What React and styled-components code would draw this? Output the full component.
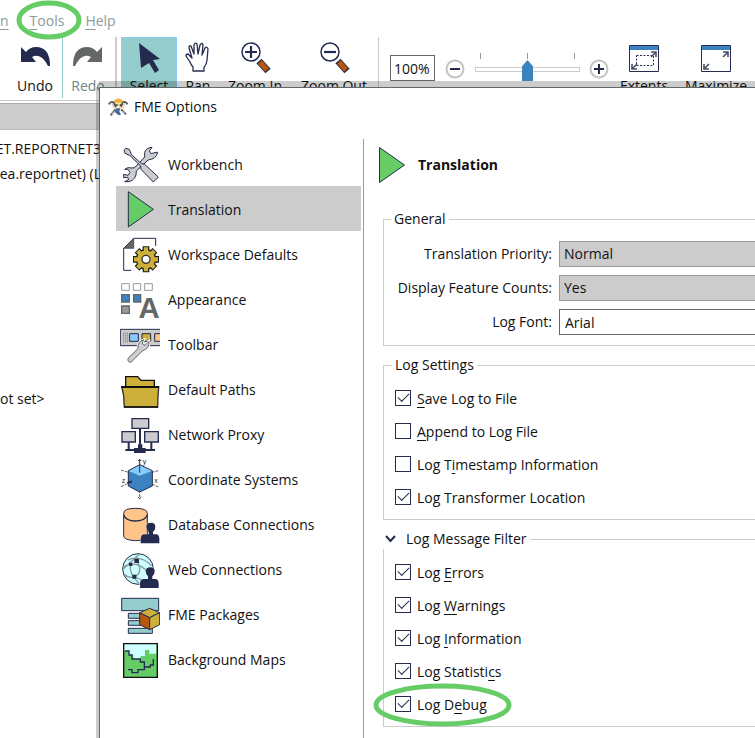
import React from 'react';
import styled, { createGlobalStyle, css } from 'styled-components';

const NAVY = '#252b4f';
const GREY = '#cccccc';
const TEAL = '#95cccc';
const GREEN = '#66cc66';
const GOLD = '#ccb03a';
const BLUE = '#3b83c0';
const SLATE = '#636866';

const GlobalStyle = createGlobalStyle`
  *, *::before, *::after { box-sizing: border-box; }
  body { margin: 0; background: #fff; overflow: hidden; }
  body, button, input, select {
    font-family: 'Open Sans', 'Noto Sans', sans-serif;
    font-size: 14px;
    line-height: 20px;
    color: #111;
  }
  button { border: 0; background: none; padding: 0; }
  svg { display: block; flex: none; }
`;

/* ---------- Layout ---------- */

const Desktop = styled.div`
  display: grid;
  min-height: 100vh;
  overflow: hidden;
  > * { grid-area: 1 / 1; min-width: 0; }
`;

const MainWindow = styled.div`
  display: flex;
  flex-direction: column;
`;

const MenuBar = styled.nav`
  display: flex;
  gap: 21px;
  height: 37px;
  padding-top: 11px;
`;

const MenuItem = styled.button`
  position: relative;
  height: 20px;
  color: #8d9a9a;
  u { text-underline-offset: 3px; }
`;

const Ring = styled.svg`
  position: absolute;
  left: ${(p) => p.$x}px;
  top: ${(p) => p.$y}px;
  overflow: visible;
  pointer-events: none;
`;

const Toolbar = styled.div`
  display: flex;
  align-items: flex-start;
  height: 64px;
  padding-left: 8px;
  border-bottom: 1px solid ${GREY};
`;

const ToolButton = styled.button`
  display: flex;
  flex-direction: column;
  align-items: center;
  flex: none;
  width: ${(p) => p.$width}px;
  height: 61px;
  white-space: nowrap;
  color: ${(p) => (p.disabled ? '#6f8484' : '#111')};
  svg { margin: 1px 0 2px; }
  ${(p) => p.$active && css`
    background: ${TEAL};
    box-shadow: inset 0 0 0 1px #88ccff;
  `}
`;

const Rule = styled.div`
  flex: none;
  width: ${(p) => p.$width}px;
  height: 61px;
  margin: 0 ${(p) => p.$after}px 0 ${(p) => p.$before}px;
  background: ${(p) => p.$color};
`;

const ZoomField = styled.input`
  flex: none;
  width: 45px;
  height: 26px;
  margin-top: 18px;
  padding: 0 3px;
  border: 1px solid ${SLATE};
  background: #fff;
`;

const RoundButton = styled.button`
  flex: none;
  margin: 22px ${(p) => p.$gap}px 0;
`;

const SliderBox = styled.div`
  flex: none;
  display: flex;
  flex-direction: column;
  width: 105px;
  padding-top: 16px;
`;

const Ticks = styled.div`
  display: flex;
  justify-content: space-between;
  padding: 0 5px;
  i { width: 1px; height: 6px; background: #999; }
`;

const Slider = styled.input`
  appearance: none;
  width: 100%;
  height: 21px;
  margin: 0;
  background: none;
  &::-webkit-slider-runnable-track {
    height: 5px;
    border: 1px solid ${GREY};
    background: #fff;
  }
  &::-webkit-slider-thumb {
    appearance: none;
    width: 11px;
    height: 21px;
    margin-top: -8px;
    background: ${BLUE};
    clip-path: polygon(50% 0, 100% 30%, 100% 100%, 0 100%, 0 30%);
  }
`;

const PanelHeader = styled.div`
  height: 27px;
  margin: 2px 0 9px;
  border-top: 1px solid #aaa;
  border-bottom: 1px solid #bbb;
  background: ${GREY};
`;

const Panel = styled.div`
  display: flex;
  flex-direction: column;
  align-items: flex-end;
  width: 101px;
`;

const PanelLine = styled.div`
  height: 20px;
  margin-bottom: 5px;
  white-space: nowrap;
`;

const PanelNote = styled(PanelLine)`
  align-self: flex-start;
  margin-top: 200px;
`;

/* ---------- Dialog ---------- */

const Dialog = styled.section`
  z-index: 1;
  display: flex;
  flex-direction: column;
  margin: 87px 0 0 99px;
  border-top: 1px solid ${SLATE};
  border-left: 1px solid ${SLATE};
  background: #fff;
  box-shadow: 0 -6px 0 rgba(0, 0, 0, 0.2), -3px 0 0 rgba(0, 0, 0, 0.2);
`;

const TitleBar = styled.header`
  display: flex;
  align-items: center;
  gap: 6px;
  height: 38px;
  padding-left: 8px;
`;

const DialogBody = styled.div`
  display: flex;
  flex: 1;
  margin-top: 13px;
`;

const Sections = styled.nav`
  flex: none;
  display: flex;
  flex-direction: column;
  width: 264px;
  padding: 2px 2px 0 16px;
  border-right: 1px solid #999;
`;

const SectionButton = styled.button`
  display: flex;
  align-items: center;
  gap: 8px;
  height: 45px;
  padding-left: 4px;
  text-align: left;
  background: ${(p) => (p.$active ? GREY : 'transparent')};
  span { padding-top: 2px; }
`;

const Page = styled.main`
  flex: 1;
  min-width: 0;
  padding: 7px 0 10px 14px;
`;

const PageTitle = styled.h1`
  display: flex;
  align-items: center;
  gap: 13px;
  height: 38px;
  margin: 0 0 25px;
  font-size: 14px;
  font-weight: 700;
`;

const Group = styled.fieldset`
  min-width: 0;
  margin: 0 0 9px 5px;
  padding: ${(p) => p.$pad};
  border: 1px solid ${GREY};
  border-right: 0;
  legend { height: 20px; padding: 0 3px; margin-left: -3px; }
`;

const FieldGrid = styled.div`
  display: grid;
  grid-template-columns: 158px 1fr;
  gap: 8px 7px;
  align-items: center;
  label { text-align: right; white-space: nowrap; }
`;

const fieldStyle = css`
  appearance: none;
  width: 100%;
  height: 26px;
  border: 1px solid #999;
  border-right: 0;
  border-radius: 0;
  padding: 0 4px;
`;

const Select = styled.select`
  ${fieldStyle}
  background: ${GREY};
`;

const TextInput = styled.input`
  ${fieldStyle}
  border-color: ${SLATE};
  padding-left: 5px;
  background: #fff;
`;

const CheckList = styled.div`
  display: flex;
  flex-direction: column;
  align-items: flex-start;
  gap: 13px;
`;

const CheckRow = styled.label`
  position: relative;
  display: flex;
  align-items: center;
  gap: 6px;
  height: 20px;
  white-space: nowrap;
  u { text-underline-offset: 3px; }
  input {
    appearance: none;
    display: grid;
    place-items: center;
    width: 16px;
    height: 16px;
    margin: 0 0 2px;
    border: 1px solid ${NAVY};
    background: #fff;
  }
  input:checked::before {
    content: '';
    width: 11px;
    height: 6px;
    border: solid ${NAVY};
    border-width: 0 0 1px 1px;
    transform: translateY(-2px) rotate(-45deg);
  }
`;

const Disclosure = styled.button`
  display: flex;
  align-items: center;
  gap: 9px;
  height: 20px;
  margin-left: -12px;
  padding-left: 1px;
  background: #fff;
`;

/* ---------- Toolbar icons ---------- */

const UndoIcon = ({ flip, color }) => (
  <svg width="32" height="36" viewBox="0 0 32 36">
    <g transform={flip ? 'translate(32 0) scale(-1 1)' : undefined} fill={color}>
      <path d="M2 9 L2 24 L17 24 L13 19 Q22 14 29 28 L31 28 Q31 9 17 9 Q11 9 7 14 Z" />
    </g>
  </svg>
);

const SelectIcon = () => (
  <svg width="32" height="36" viewBox="0 0 32 36">
    <path d="M6 5 L27 21 L20 22 L26 32 L22 35 L16 25 L8 30 Z" fill={NAVY} />
  </svg>
);

const PanIcon = () => (
  <svg width="32" height="36" viewBox="0 0 32 36">
    <path
      d="M11 33 V29 Q9 27 8 24 L4 18 Q4 16 6 16 L10 20 L7 10 Q7 7 9 8 L12 16 L12 7 Q13 4 15 6 L16 16 L18 7 Q20 4 21 7 L20 17 L23 10 Q25 8 26 11 L25 22 Q24 28 22 29 V33 Z"
      fill="#fff" stroke={NAVY} strokeWidth="1.3" strokeLinejoin="round"
    />
  </svg>
);

const MagnifierIcon = ({ plus }) => (
  <svg width="32" height="36" viewBox="0 0 32 36">
    <path d="M20 23 L29 33" stroke={NAVY} strokeWidth="7" />
    <path d="M21 24 L28 32" stroke="#b8560c" strokeWidth="5" />
    <circle cx="12" cy="14" r="9" fill="#fff" stroke={NAVY} strokeWidth="1.5" />
    <path d={plus ? 'M6 14 H18 M12 8 V20' : 'M6 14 H18'} stroke={NAVY} strokeWidth="2.2" />
  </svg>
);

const RoundIcon = ({ plus }) => (
  <svg width="20" height="20" viewBox="0 0 20 20">
    <circle cx="10" cy="10" r="8.5" fill="#fff" stroke="#c4c4c4" strokeWidth="2" />
    <path d={plus ? 'M5 10 H15 M10 5 V15' : 'M5 10 H15'} stroke={NAVY} strokeWidth="2" />
  </svg>
);

const WindowIcon = ({ dashed }) => (
  <svg width="32" height="36" viewBox="0 0 32 36">
    <path d="M1.5 7.5 H30.5 V33.5 H1.5 Z" fill="#fff" stroke={NAVY} />
    <path d="M2 8 H30 V12 H2 Z" fill={BLUE} />
    {dashed && <path d="M8.5 17.5 H25.5 V27.5 H8.5 Z" fill="none" stroke={NAVY} strokeDasharray="2 1.5" />}
    <g stroke="#4b4f66" strokeWidth="1.6" fill="none">
      <path d="M23 14 H28 V19 M28 14 L23 19" />
      <path d="M4 26 V31 H9 M4 31 L9 26" />
    </g>
  </svg>
);

/* ---------- Section icons, drawn on a 3-unit pixel grid ---------- */

const SectionIcon = ({ top, children }) => (
  <svg width="40" height="45" viewBox={`30 ${top} 120 135`} aria-hidden="true">{children}</svg>
);

const PlayIcon = () => (
  <svg width="27" height="38" viewBox="0 0 27 38">
    <path d="M1.5 1.5 L26.5 19 L1.5 36.5 Z" fill={GREEN} stroke={NAVY} />
  </svg>
);

const Person = () => (
  <g fill={NAVY} stroke="#fff" strokeWidth="2" paintOrder="stroke">
    <path d="M109 350 Q109 338 123 338 Q136 338 136 350 Q136 361 129 365 V373 H141 Q148 376 148 385 V400 H92 V385 Q92 376 100 373 H116 V365 Q109 360 109 350 Z" />
  </g>
);

const CubeEdges = { fill: 'none', stroke: NAVY, strokeWidth: 3 };

const icons = {
  workbench: (
    <SectionIcon top={18}>
      <g fill={GREY} stroke={NAVY} strokeWidth="3" strokeLinejoin="round">
        <path d="M41 118 L54 121 L60 112 L54 103 H44 Q52 95 66 99 L74 98 L104 66 V52 Q108 38 126 37 L118 48 L123 56 L138 52 L143 52 Q139 72 114 75 L79 108 Q80 134 57 140 H44 L56 134 L53 127 L41 128 Z" />
        <path d="M42 46 L47 40 L58 43 L64 58 L94 86 L104 88 L145 126 L130 141 L93 103 L92 93 L60 62 L45 55 Z" />
      </g>
    </SectionIcon>
  ),
  translation: (
    <SectionIcon top={153}>
      <path d="M55 170 L130 223 L55 276 Z" fill={GREEN} stroke={NAVY} strokeWidth="3" />
    </SectionIcon>
  ),
  workspace: (
    <SectionIcon top={288}>
      <path d="M64 406 H41 V340 L71 310 H137 V333" fill="#fff" stroke={NAVY} strokeWidth="3" />
      <path d="M41 340 L71 310 V340 Z" fill={SLATE} stroke={NAVY} strokeWidth="2" />
      <g transform="translate(108 373)">
        <g stroke="#1c1c1c" strokeWidth="20">
          <path d="M0 -39 V39 M-39 0 H39 M-27 -27 L27 27 M27 -27 L-27 27" />
        </g>
        <circle r="31" fill="#1c1c1c" />
        <g stroke={GOLD} strokeWidth="13">
          <path d="M0 -36 V36 M-36 0 H36 M-25 -25 L25 25 M25 -25 L-25 25" />
        </g>
        <circle r="27" fill={GOLD} />
        <circle r="12" fill="#fff" stroke="#333" strokeWidth="4" />
      </g>
    </SectionIcon>
  ),
  appearance: (
    <SectionIcon top={3}>
      <g fill="#fff" stroke="#999" strokeWidth="3">
        <path d="M35 26 H58 V46 H35 Z M70 26 H92 V46 H70 Z M104 26 H127 V46 H104 Z" />
      </g>
      <g fill={BLUE} stroke={SLATE} strokeWidth="4">
        <path d="M35 59 H58 V81 H35 Z M71 59 H92 V81 H71 Z" />
      </g>
      <path d="M35 93 H58 V115 H35 Z" fill="#999" stroke={SLATE} strokeWidth="4" />
      <text x="117" y="128" textAnchor="middle" fontFamily="Liberation Sans, sans-serif" fontWeight="700" fontSize="88" fill={SLATE}>A</text>
    </SectionIcon>
  ),
  toolbar: (
    <SectionIcon top={138}>
      <path d="M152 163 H31 V212 H152" fill={GREY} stroke={NAVY} strokeWidth="3" />
      <path d="M41 173 V204 M47 173 V204 M53 173 V204" stroke="#666" strokeWidth="3" strokeDasharray="3 3" />
      <g stroke={NAVY} strokeWidth="3">
        <path d="M59 176 H85 V199 H59 Z" fill="#88ccff" />
        <path d="M96 176 H122 V199 H96 Z" fill={GOLD} />
        <path d="M134 176 H153 V199 H134 Z" fill="#ffc488" />
      </g>
      <path d="M54 250 L84 221 Q82 199 101 194 L96 205 L105 211 L117 199 Q120 219 97 228 L64 261 Q52 264 54 250 Z" fill={GREY} stroke="#fff" strokeWidth="8" />
      <path d="M54 250 L84 221 Q82 199 101 194 L96 205 L105 211 L117 199 Q120 219 97 228 L64 261 Q52 264 54 250 Z" fill={GREY} stroke={SLATE} strokeWidth="3" />
    </SectionIcon>
  ),
  paths: (
    <SectionIcon top={273}>
      <path d="M47 334 V305 H83 L93 316 H133 V334" fill={GOLD} stroke="#111" strokeWidth="4" />
      <path d="M34 336 H147 L144 362 L143 396 H42 L40 362 Z" fill={GOLD} />
      <path d="M33 336 H148" stroke="#111" strokeWidth="6" />
      <path d="M36 339 L41 362 L43 396 H143 L144 362 L146 339" fill="none" stroke="#333" strokeWidth="4" />
      <path d="M42 396 H144" stroke="#111" strokeWidth="5" />
    </SectionIcon>
  ),
  network: (
    <SectionIcon top={3}>
      <path d="M90 56 V104 M56 97 V120 M124 97 V120 M46 120 H135" stroke={NAVY} strokeWidth="6" />
      <path d="M84 103 H97 V114 H107 V129 H72 V114 H84 Z" fill={NAVY} />
      <g fill={GREY} stroke={NAVY} strokeWidth="4">
        <path d="M66 26 H116 V55 H66 Z M36 65 H76 V96 H36 Z M104 65 H145 V96 H104 Z" />
      </g>
    </SectionIcon>
  ),
  coordinates: (
    <SectionIcon top={138}>
      <path d="M33 180 L55 187 M145 182 L126 187 M33 230 L55 220 M126 222 L145 231 M89 240 V266" stroke={SLATE} strokeWidth="3" strokeDasharray="9 3" />
      <path d="M55 182 L89 164 L127 182 L89 200 Z" fill="#88ccff" />
      <path d="M55 182 L89 197 L127 182 V228 L89 246 L55 228 Z" fill={BLUE} />
      <path d="M55 182 L89 164 L127 182 V228 L89 246 L55 228 Z M89 148 V188 M84 153 L89 148 L94 153 M84 261 L89 266 L94 261" {...CubeEdges} />
      <path d="M52 219 L66 214" stroke={NAVY} strokeWidth="6" />
      <g fontSize="21" fill={NAVY} fontFamily="Liberation Sans, sans-serif">
        <text x="98" y="162">y</text>
        <text x="133" y="218">x</text>
        <text x="35" y="218">z</text>
      </g>
    </SectionIcon>
  ),
  database: (
    <SectionIcon top={273}>
      <path d="M41 310 Q41 295 76 295 Q112 295 112 310 V380 Q110 392 76 392 Q41 390 41 378 Z" fill="#ffc488" stroke={NAVY} strokeWidth="3" />
      <path d="M41 315 Q48 333 76 333 Q105 333 112 315" fill="none" stroke={NAVY} strokeWidth="4" />
      <Person />
    </SectionIcon>
  ),
  web: (
    <SectionIcon top={3}>
      <circle cx="84" cy="72" r="46" fill="#ccffff" stroke={NAVY} strokeWidth="3" />
      <path d="M53 45 Q90 28 125 62 M40 72 Q80 35 88 28 M62 57 Q95 55 116 86 M62 57 Q55 85 86 114 M80 48 Q102 80 73 96 Q55 100 43 88 M73 96 L110 110 M62 57 L40 65" fill="none" stroke="#8a9a9a" strokeWidth="4" />
      <path d="M73 41 H87 V54 H73 Z M57 53 H67 V63 H57 Z M67 89 H79 V101 H67 Z" fill={NAVY} />
      <g transform="translate(-2 -271)"><Person /></g>
    </SectionIcon>
  ),
  packages: (
    <SectionIcon top={138}>
      <g fill={TEAL} stroke={NAVY} strokeWidth="3">
        <path d="M35 160 H146 V197 H35 Z M55 205 H94 V220 H55 Z M55 227 H94 V241 H55 Z M55 250 H127 V265 H55 Z" />
      </g>
      <path d="M89 203 L119 190 L149 203 L119 218 Z" fill={GOLD} stroke={NAVY} strokeWidth="3" />
      <path d="M89 203 L119 218 V254 L89 239 Z" fill="#b8560c" stroke={NAVY} strokeWidth="3" />
      <path d="M149 203 L119 218 V254 L149 239 Z" fill={GOLD} stroke={NAVY} strokeWidth="3" />
    </SectionIcon>
  ),
  maps: (
    <SectionIcon top={273}>
      <path d="M40 295 H142 V397 H40 Z" fill={GREEN} />
      <path d="M42 297 H139 V326 H118 V315 H105 V333 H92 V343 H70 V330 H57 V318 H42 Z" fill="#ccffff" />
      <path d="M45 318 H57 V330 H66 V342 H91 V351 H103 V366 H121 V360 H130 V342 M103 366 V374 H84 V383 H66 V374 H54" fill="none" stroke={NAVY} strokeWidth="4" />
      <path d="M41 296 H142 V397 H41 Z" fill="none" stroke="#111" strokeWidth="4" />
    </SectionIcon>
  ),
};

const AppIcon = () => (
  <svg width="20" height="20" viewBox="0 0 60 60">
    <circle cx="31" cy="23" r="18" fill="#f9e6bd" stroke="#c9c9c9" strokeWidth="2" />
    <path d="M18 17 Q20 5 32 5 Q43 6 45 17 Z" fill="#f0b429" />
    <path d="M24 24 H29 M35 24 H40" stroke="#333" strokeWidth="4" />
    <path d="M24 34 H37 L34 43 L39 54 H31 L21 46 Z" fill="#3b6ca3" />
    <path d="M3 22 Q8 11 17 17 L24 30 M58 22 Q52 12 45 17 L38 29 M22 38 L8 55 M40 38 L54 52" fill="none" stroke="#555" strokeWidth="6" />
    <path d="M7 18 L16 20 M45 19 L54 20 M19 43 L11 52 M43 42 L50 49" stroke="#ddd" strokeWidth="3" />
  </svg>
);

/* ---------- Data ---------- */

const sections = [
  ['workbench', 'Workbench'],
  ['translation', 'Translation'],
  ['workspace', 'Workspace Defaults'],
  ['appearance', 'Appearance'],
  ['toolbar', 'Toolbar'],
  ['paths', 'Default Paths'],
  ['network', 'Network Proxy'],
  ['coordinates', 'Coordinate Systems'],
  ['database', 'Database Connections'],
  ['web', 'Web Connections'],
  ['packages', 'FME Packages'],
  ['maps', 'Background Maps'],
];

/* [text before the access key, access key, text after, checked] */
const logSettings = [
  ['', 'S', 'ave Log to File', true],
  ['', 'A', 'ppend to Log File', false],
  ['Log T', 'i', 'mestamp Information', false],
  ['Log Transformer Location', '', '', true],
];

const logFilters = [
  ['Log ', 'E', 'rrors', true],
  ['Log ', 'W', 'arnings', true],
  ['Log ', 'I', 'nformation', true],
  ['Log Statisti', 'c', 's', true],
  ['Log D', 'e', 'bug', true],
];

const Highlight = ({ x, y, width, height }) => (
  <Ring $x={x} $y={y} width={width} height={height} aria-hidden="true">
    <ellipse cx={width / 2} cy={height / 2} rx={width / 2 - 2} ry={height / 2 - 2} fill="none" stroke={GREEN} strokeWidth="5" />
  </Ring>
);

const Check = ({ item: [before, key, after, checked], children }) => (
  <CheckRow>
    <input type="checkbox" defaultChecked={checked} />
    <span>{before}{key && <u>{key}</u>}{after}</span>
    {children}
  </CheckRow>
);

export default function App() {
  return (
    <>
      <GlobalStyle />
      <Desktop>
        <MainWindow>
          <MenuBar>
            <MenuItem><u>n</u></MenuItem>
            <MenuItem>
              <u>T</u>ools
              <Highlight x={-13} y={-10} width={64} height={38} />
            </MenuItem>
            <MenuItem><u>H</u>elp</MenuItem>
          </MenuBar>
          <Toolbar>
            <ToolButton $width={54}><UndoIcon color={NAVY} />Undo</ToolButton>
            <Rule $width={1} $before={0} $after={0} $color={TEAL} />
            <ToolButton $width={50} disabled><UndoIcon flip color={SLATE} />Redo</ToolButton>
            <Rule $width={2} $before={2} $after={4} $color={GREY} />
            <ToolButton $width={56} $active><SelectIcon />Select</ToolButton>
            <ToolButton $width={42}><PanIcon />Pan</ToolButton>
            <ToolButton $width={72}><MagnifierIcon plus />Zoom In</ToolButton>
            <ToolButton $width={86}><MagnifierIcon />Zoom Out</ToolButton>
            <Rule $width={1} $before={1} $after={11} $color={GREY} />
            <ZoomField aria-label="Zoom level" defaultValue="100%" />
            <RoundButton $gap={10} aria-label="Decrease zoom"><RoundIcon /></RoundButton>
            <SliderBox>
              <Ticks><i /><i /><i /></Ticks>
              <Slider type="range" aria-label="Zoom" defaultValue={50} />
            </SliderBox>
            <RoundButton $gap={9} aria-label="Increase zoom"><RoundIcon plus /></RoundButton>
            <ToolButton $width={52}><WindowIcon dashed />Extents</ToolButton>
            <Rule $width={0} $before={0} $after={10} $color="transparent" />
            <ToolButton $width={72}><WindowIcon />Maximize</ToolButton>
          </Toolbar>
          <PanelHeader />
          <Panel>
            <PanelLine>ET.REPORTNET3</PanelLine>
            <PanelLine>ea.reportnet) (L</PanelLine>
            <PanelNote>ot set&gt;</PanelNote>
          </Panel>
        </MainWindow>

        <Dialog role="dialog" aria-label="FME Options">
          <TitleBar><AppIcon />FME Options</TitleBar>
          <DialogBody>
            <Sections>
              {sections.map(([id, label]) => (
                <SectionButton key={id} $active={id === 'translation'}>
                  {icons[id]}
                  <span>{label}</span>
                </SectionButton>
              ))}
            </Sections>
            <Page>
              <PageTitle><PlayIcon />Translation</PageTitle>
              <Group $pad="12px 0 10px 10px">
                <legend>General</legend>
                <FieldGrid>
                  <label htmlFor="priority">Translation Priority:</label>
                  <Select id="priority"><option>Normal</option></Select>
                  <label htmlFor="counts">Display Feature Counts:</label>
                  <Select id="counts"><option>Yes</option></Select>
                  <label htmlFor="font">Log Font:</label>
                  <TextInput id="font" defaultValue="Arial" />
                </FieldGrid>
              </Group>
              <Group $pad="14px 0 11px 11px">
                <legend>Log Settings</legend>
                <CheckList>
                  {logSettings.map((item) => <Check key={item.join('')} item={item} />)}
                </CheckList>
              </Group>
              <Group $pad="14px 0 11px 11px">
                <legend>
                  <Disclosure aria-expanded="true">
                    <svg width="13" height="8" viewBox="0 0 13 8">
                      <path d="M2 1 L6.5 6 L11 1" fill="none" stroke={NAVY} strokeWidth="2" />
                    </svg>
                    Log Message Filter
                  </Disclosure>
                </legend>
                <CheckList>
                  {logFilters.map((item, i) => (
                    <Check key={item.join('')} item={item}>
                      {i === logFilters.length - 1 && <Highlight x={-21} y={-11} width={137} height={42} />}
                    </Check>
                  ))}
                </CheckList>
              </Group>
            </Page>
          </DialogBody>
        </Dialog>
      </Desktop>
    </>
  );
}
